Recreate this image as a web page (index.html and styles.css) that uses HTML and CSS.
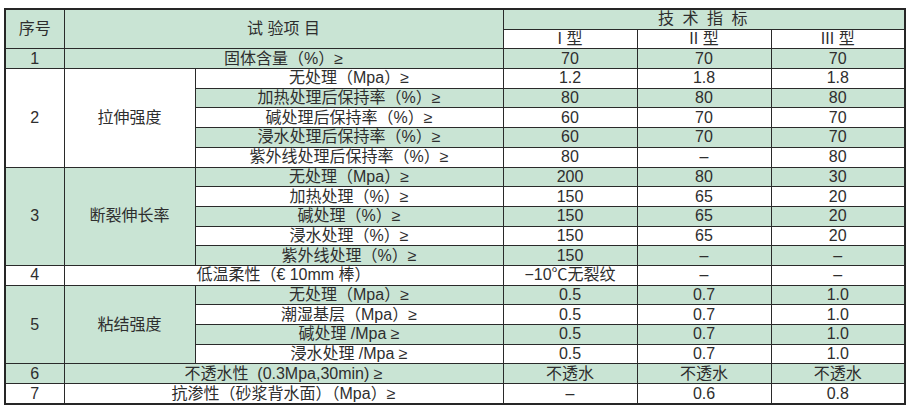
FILE: index.html
```html
<!DOCTYPE html>
<html lang="zh">
<head>
<meta charset="utf-8">
<link rel="stylesheet" href="styles.css">
</head>
<body>
<div class="wrap">
<table class="spec">
  <colgroup>
    <col class="c-no"><col class="c-grp"><col class="c-item"><col class="c-v"><col class="c-v"><col class="c-v">
  </colgroup>
  <tr class="g">
    <td rowspan="2">序号</td>
    <td rowspan="2" colspan="2">试 验项 目</td>
    <td colspan="3" class="spaced">技 术 指 标</td>
  </tr>
  <tr class="w">
    <td>I 型</td><td>II 型</td><td>III 型</td>
  </tr>
  <tr class="g">
    <td>1</td><td colspan="2">固体含量（%）≥</td><td>70</td><td>70</td><td>70</td>
  </tr>
  <tr class="w">
    <td rowspan="5" class="wc">2</td><td rowspan="5" class="wc">拉伸强度</td>
    <td>无处理（Mpa）≥</td><td>1.2</td><td>1.8</td><td>1.8</td>
  </tr>
  <tr class="g"><td>加热处理后保持率（%）≥</td><td>80</td><td>80</td><td>80</td></tr>
  <tr class="w"><td>碱处理后保持率（%）≥</td><td>60</td><td>70</td><td>70</td></tr>
  <tr class="g"><td>浸水处理后保持率（%）≥</td><td>60</td><td>70</td><td>70</td></tr>
  <tr class="w"><td>紫外线处理后保持率（%）≥</td><td>80</td><td>–</td><td>80</td></tr>
  <tr class="g">
    <td rowspan="5" class="gc">3</td><td rowspan="5" class="gc">断裂伸长率</td>
    <td>无处理（Mpa）≥</td><td>200</td><td>80</td><td>30</td>
  </tr>
  <tr class="w"><td>加热处理（%）≥</td><td>150</td><td>65</td><td>20</td></tr>
  <tr class="g"><td>碱处理（%）≥</td><td>150</td><td>65</td><td>20</td></tr>
  <tr class="w"><td>浸水处理（%）≥</td><td>150</td><td>65</td><td>20</td></tr>
  <tr class="g"><td>紫外线处理（%）≥</td><td>150</td><td>–</td><td>–</td></tr>
  <tr class="w">
    <td>4</td><td colspan="2">低温柔性（€ 10mm 棒）</td><td>−10℃无裂纹</td><td>–</td><td>–</td>
  </tr>
  <tr class="g">
    <td rowspan="4" class="gc">5</td><td rowspan="4" class="gc">粘结强度</td>
    <td>无处理（Mpa）≥</td><td>0.5</td><td>0.7</td><td>1.0</td>
  </tr>
  <tr class="w"><td>潮湿基层（Mpa）≥</td><td>0.5</td><td>0.7</td><td>1.0</td></tr>
  <tr class="g"><td>碱处理 /Mpa ≥</td><td>0.5</td><td>0.7</td><td>1.0</td></tr>
  <tr class="w"><td>浸水处理 /Mpa ≥</td><td>0.5</td><td>0.7</td><td>1.0</td></tr>
  <tr class="g">
    <td>6</td><td colspan="2">不透水性 &nbsp;(0.3Mpa,30min) ≥</td><td>不透水</td><td>不透水</td><td>不透水</td>
  </tr>
  <tr class="w">
    <td>7</td><td colspan="2">抗渗性（砂浆背水面）（Mpa）≥</td><td>–</td><td>0.6</td><td>0.8</td>
  </tr>
</table>
</div>
</body>
</html>
```

FILE: styles.css
```css
html, body {
  margin: 0;
  padding: 0;
  background: #ffffff;
}

.wrap {
  padding: 8px 6px 0 4px;
}

.spec {
  border-collapse: collapse;
  table-layout: fixed;
  width: 902px;
  height: 397px;
  font-family: "Liberation Sans", "Noto Sans CJK SC", sans-serif;
  font-size: 16px;
  color: #2e2e2e;
  border: 2px solid #262626;
}

.c-no { width: 59px; }
.c-grp { width: 131px; }
.c-item { width: 308px; }
.c-v { width: 134px; }

.spec td {
  border: 1px solid #2a2a2a;
  padding: 0;
  height: 18px;
  line-height: 18px;
  text-align: center;
  white-space: nowrap;
  overflow: hidden;
}

.spec tr.g td { background: #c9e4d4; }
.spec tr.w td { background: #ffffff; }
.spec tr td.wc { background: #ffffff; }
.spec tr td.gc { background: #c9e4d4; }

.spaced { letter-spacing: 2px; }
```
